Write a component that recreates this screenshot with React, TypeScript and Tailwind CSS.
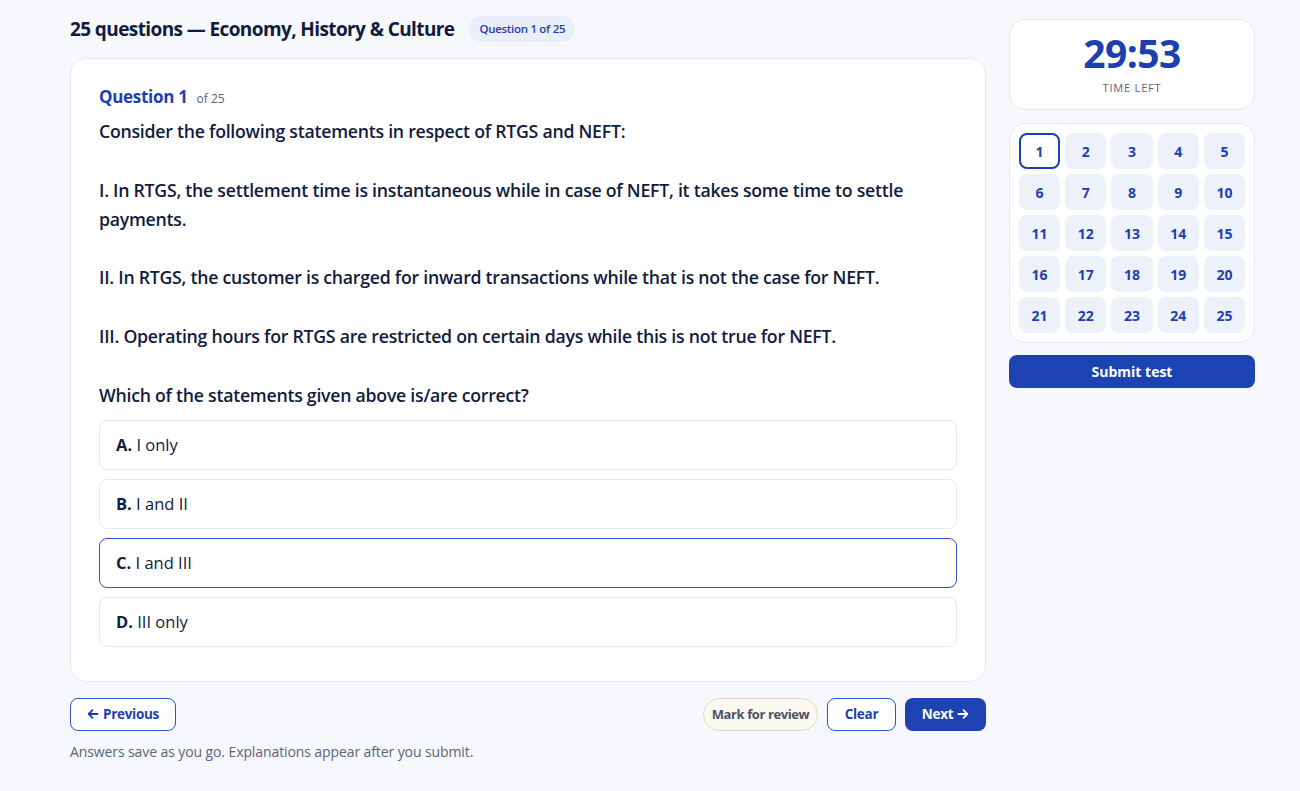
import React, { useState } from "react";

const QUESTION_TEXT = `Consider the following statements in respect of RTGS and NEFT:

I. In RTGS, the settlement time is instantaneous while in case of NEFT, it takes some time to settle payments.

II. In RTGS, the customer is charged for inward transactions while that is not the case for NEFT.

III. Operating hours for RTGS are restricted on certain days while this is not true for NEFT.

Which of the statements given above is/are correct?`;

const OPTIONS = [
  { key: "A", label: "I only" },
  { key: "B", label: "I and II" },
  { key: "C", label: "I and III" },
  { key: "D", label: "III only" },
];

const Arrow = ({ dir }: { dir: "left" | "right" }) => (
  <svg width="12" height="12" viewBox="0 0 12 12" fill="none" stroke="currentColor" strokeWidth="1.8" strokeLinecap="round" strokeLinejoin="round">
    {dir === "left" ? (
      <>
        <path d="M10.5 6H1.8" />
        <path d="M5.5 2.2L1.7 6l3.8 3.8" />
      </>
    ) : (
      <>
        <path d="M1.5 6h8.7" />
        <path d="M6.5 2.2L10.3 6l-3.8 3.8" />
      </>
    )}
  </svg>
);

const App: React.FC = () => {
  const [current, setCurrent] = useState(1);
  const [selected, setSelected] = useState<string | null>("C");

  return (
    <div
      className="min-h-[791px] bg-[#f6f8fc] text-[#111c3d] pl-[70px] pr-[45px] pt-4"
      style={{ fontFamily: '"Open Sans", "Noto Sans", sans-serif' }}
    >
      <div className="flex gap-[23px]">
        {/* main column */}
        <div className="w-[916px] shrink-0">
          <div className="flex items-center h-[26px] gap-[15px]">
            <h1 className="text-[19px] font-bold tracking-[-0.6px] text-[#111c3d]">
              25 questions — Economy, History &amp; Culture
            </h1>
            <span className="rounded-full bg-[#e9eefa] px-[10px] py-[4px] text-[11.5px] font-semibold tracking-[-0.3px] text-[#1e40af]">
              Question {current} of 25
            </span>
          </div>

          <div className="mt-4 rounded-2xl border border-[#e4e9f3] bg-white px-[28px] pt-[25px] pb-[34px]">
            <div className="flex items-baseline gap-[9px] h-[20px]">
              <span className="text-[17px] font-bold tracking-[-0.3px] text-[#1e40af]">Question {current}</span>
              <span className="text-[12px] text-[#5b6478]">of 25</span>
            </div>
            <p className="mt-[13px] whitespace-pre-line text-[17.7px] font-semibold leading-[29.3px] tracking-[-0.25px] text-[#111c3d]">
              {QUESTION_TEXT}
            </p>
            <div className="mt-[10px] flex flex-col gap-[9px]">
              {OPTIONS.map((opt) => (
                <button
                  key={opt.key}
                  onClick={() => setSelected(opt.key)}
                  className={`h-[50px] rounded-lg border bg-white px-[16px] text-left text-[16.5px] text-[#111c3d] ${
                    selected === opt.key
                      ? "border-[#2f55c8] border-[1.5px]"
                      : "border-[#e4e9f3]"
                  }`}
                >
                  <span className="font-bold">{opt.key}.</span> {opt.label}
                </button>
              ))}
            </div>
          </div>

          <div className="mt-4 flex items-center justify-between">
            <button className="flex h-[33px] w-[106px] items-center justify-center gap-[4px] rounded-lg border border-[#2f55c8] bg-white text-[13.5px] font-bold tracking-[-0.3px] text-[#1e40af]">
              <Arrow dir="left" />
              Previous
            </button>
            <div className="flex items-center gap-[9px]">
              <button className="h-[33px] w-[115px] rounded-full border border-[#ddd8c4] bg-[#fbf9ef] text-[13px] font-bold tracking-[-0.4px] text-[#4b5263]">
                Mark for review
              </button>
              <button
                onClick={() => setSelected(null)}
                className="h-[33px] w-[69px] rounded-lg border border-[#2f55c8] bg-white text-[13.5px] font-bold tracking-[-0.3px] text-[#1e40af]"
              >
                Clear
              </button>
              <button
                onClick={() => setCurrent((c) => Math.min(25, c + 1))}
                className="flex h-[33px] w-[81px] items-center justify-center gap-[4px] rounded-lg bg-[#1d43b3] text-[13.5px] font-bold tracking-[-0.3px] text-white"
              >
                Next
                <Arrow dir="right" />
              </button>
            </div>
          </div>
          <p className="mt-[10px] text-[14px] tracking-[-0.1px] text-[#5b6478]">
            Answers save as you go. Explanations appear after you submit.
          </p>
        </div>

        {/* sidebar */}
        <div className="mt-[3px] w-[246px] shrink-0">
          <div className="flex h-[91px] flex-col items-center rounded-2xl border border-[#e4e9f3] bg-white pt-[10px]">
            <span className="text-[39px] font-bold leading-[46px] tracking-[-0.6px] text-[#1e40af]">29:53</span>
            <span className="mt-[4px] text-[11px] font-medium tracking-[0.8px] text-[#5b6478]">TIME LEFT</span>
          </div>

          <div className="mt-[13px] grid grid-cols-5 gap-[5px] rounded-2xl border border-[#e4e9f3] bg-white p-[9px]">
            {Array.from({ length: 25 }, (_, i) => i + 1).map((n) => (
              <button
                key={n}
                onClick={() => setCurrent(n)}
                className={`h-[36px] rounded-lg text-[14px] font-bold text-[#1e40af] ${
                  n === current ? "border-2 border-[#1e40af] bg-white" : "bg-[#edf1fa]"
                }`}
              >
                {n}
              </button>
            ))}
          </div>

          <button className="mt-[12px] h-[33px] w-full rounded-lg bg-[#1d43b3] text-[14px] font-bold text-white">
            Submit test
          </button>
        </div>
      </div>
    </div>
  );
};

export default App;
